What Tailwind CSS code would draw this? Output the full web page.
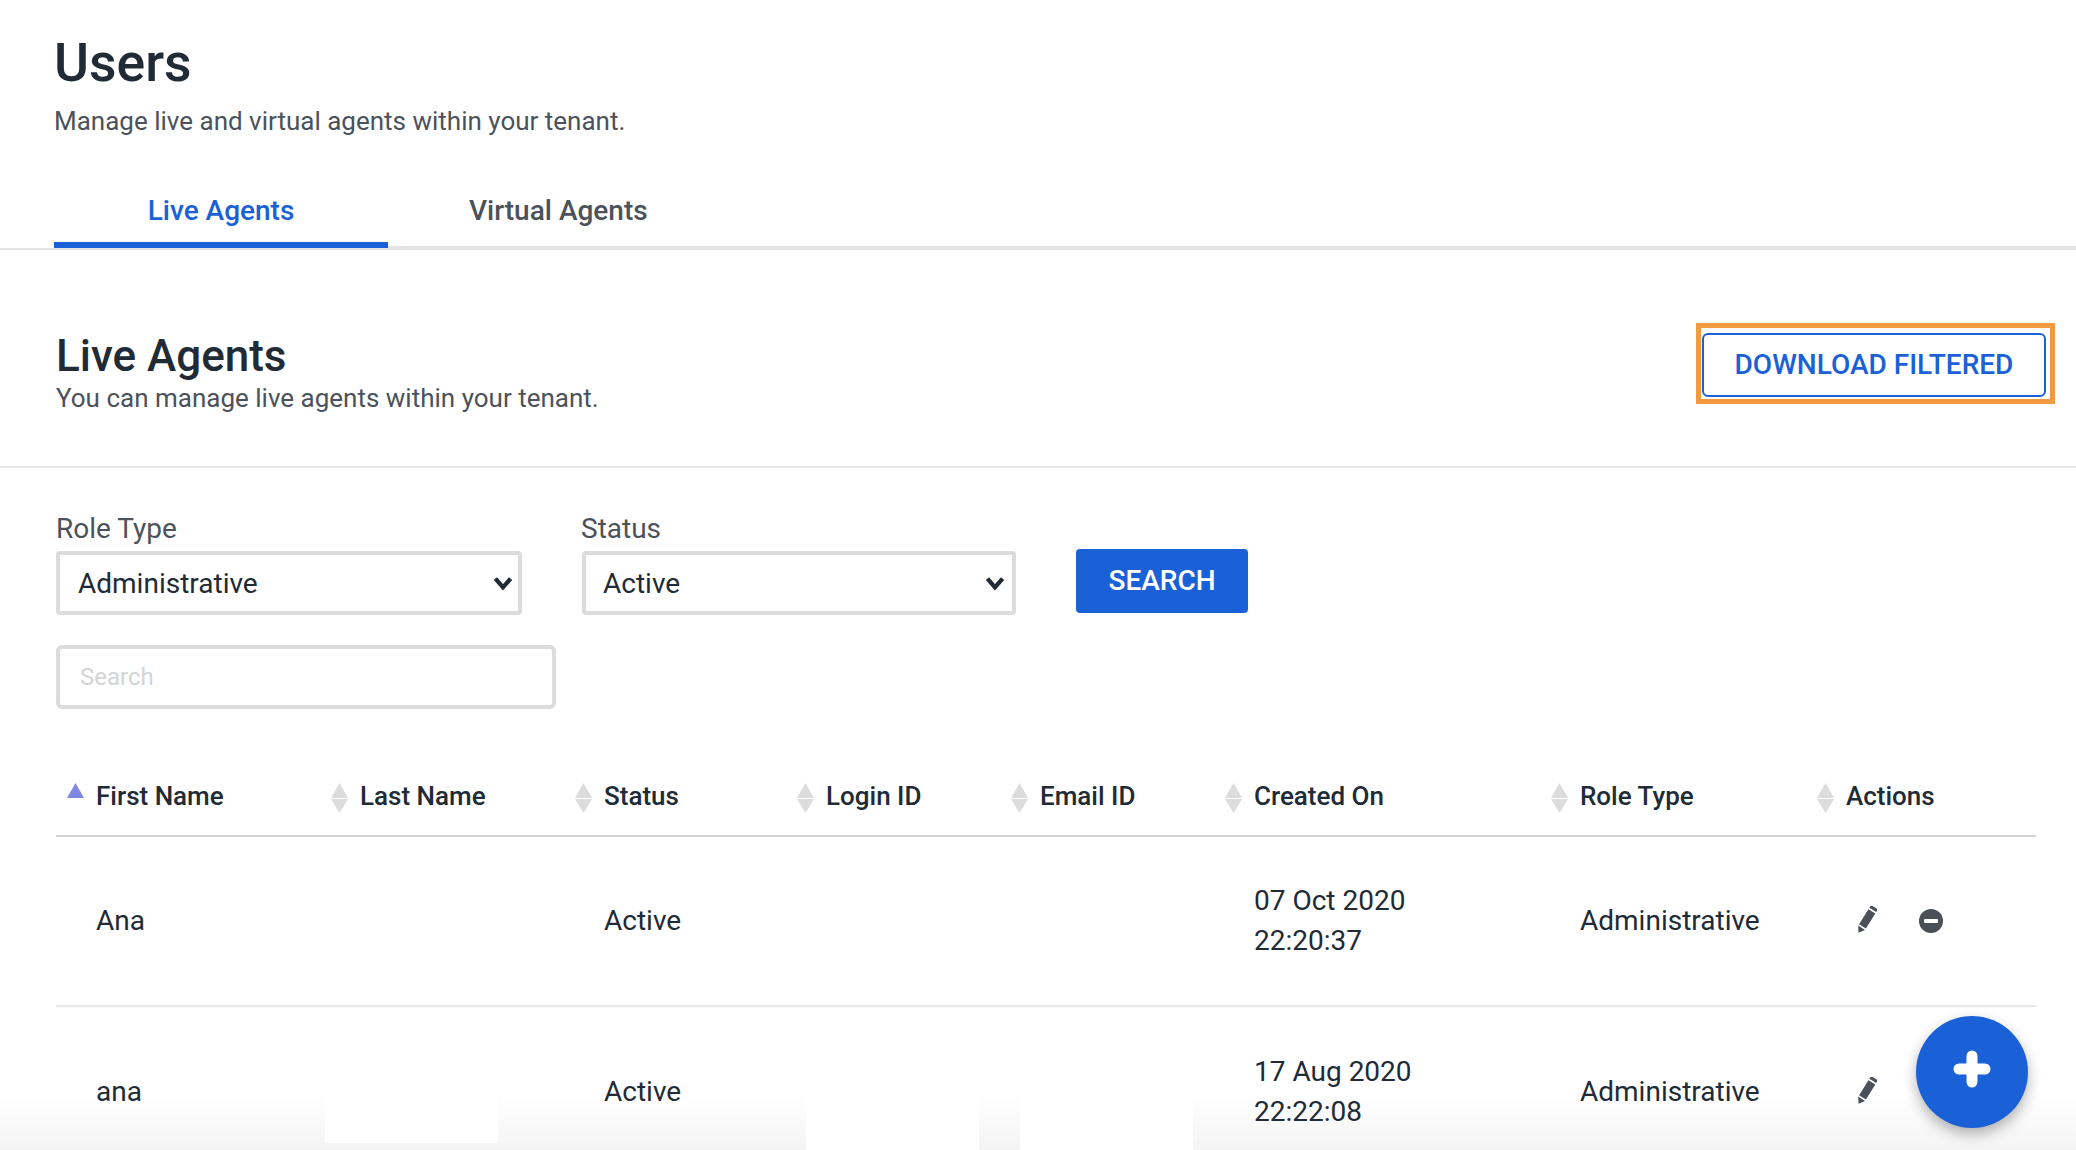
<!DOCTYPE html>
<html lang="en">
<head>
  <meta charset="UTF-8" />
  <title>Users</title>
  <script src="https://cdn.jsdelivr.net/npm/@tailwindcss/browser@4"></script>
</head>
<body class="relative h-screen overflow-hidden bg-white font-['Roboto',sans-serif] text-[#212b36]">

  <!-- FADE AT THE BOTTOM + HIDDEN VALUES -->
  <div class="absolute inset-x-0 bottom-0 h-[57px] bg-gradient-to-b from-white to-[#f4f4f4]"></div>
  <div class="absolute bottom-[7px] left-[325px] h-[50px] w-[173px] bg-white"></div>
  <div class="absolute bottom-0 left-[806px] h-[57px] w-[173px] bg-white"></div>
  <div class="absolute bottom-0 left-[1020px] h-[57px] w-[173px] bg-white"></div>

  <!-- PAGE HEADER -->
  <div class="relative pl-[54px] pt-[31px]">
    <h1 class="text-[53.5px] leading-[64px] font-medium">Users</h1>
    <p class="mt-[10px] text-[26px] leading-[32px] text-[#4b525b]">Manage live and virtual agents within your tenant.</p>
  </div>

  <!-- TABS -->
  <div class="relative mt-[35px] border-b-2 border-[#e4e4e4]">
    <div class="ml-[54px] flex h-[76px] border-b-2 border-[#e4e4e4]">
      <div class="-mb-[2px] flex h-[76px] w-[334px] items-center justify-center border-b-[6px] border-[#1a61d8] pt-[8px] text-[28px] font-medium text-[#1a61d8]">Live Agents</div>
      <div class="flex h-[76px] items-center px-[81px] pt-[2px] text-[28px] font-medium text-[#4b525b]">Virtual Agents</div>
    </div>
  </div>

  <!-- SECTION HEADER -->
  <div class="relative flex h-[218px] justify-between border-b-2 border-[#e8e8e8] pl-[56px] pr-[30px]">
    <div class="pt-[82px]">
      <h2 class="text-[44px] leading-[48px] font-medium">Live Agents</h2>
      <p class="mt-[2px] text-[26px] leading-[32px] text-[#4b525b]">You can manage live agents within your tenant.</p>
    </div>
    <div class="relative mt-[83px] h-[64px]">
      <button class="h-[64px] w-[344px] rounded-[6px] border-2 border-[#1a61d8] text-[28px] font-medium text-[#1a61d8]">DOWNLOAD FILTERED</button>
      <div class="absolute -top-[10px] -right-[9px] -bottom-[7px] -left-[6px] border-[5px] border-[#f29a3f]"></div>
    </div>
  </div>

  <!-- FILTERS -->
  <div class="relative pl-[56px] pt-[45px]">
    <div class="flex items-end gap-[60px]">
      <div class="w-[466px]">
        <label class="block text-[28px] leading-[32px] text-[#4b525b]">Role Type</label>
        <div class="relative mt-[6px] flex h-[64px] items-center rounded-[4px] border-4 border-[#dcdcdc] pl-[18px] pt-[1px] text-[28px]">
          Administrative
          <svg class="absolute right-[2px] top-[15px] h-[26px] w-[26px]" viewBox="0 0 24 24" fill="none" stroke="#212b36" stroke-width="4"><path d="M5 8l7 8 7-8" /></svg>
        </div>
      </div>
      <div class="w-[434px]">
        <label class="-ml-[1px] block text-[28px] leading-[32px] text-[#4b525b]">Status</label>
        <div class="relative mt-[6px] flex h-[64px] items-center rounded-[4px] border-4 border-[#dcdcdc] pl-[17px] pt-[1px] text-[28px]">
          Active
          <svg class="absolute right-[4px] top-[15px] h-[26px] w-[26px]" viewBox="0 0 24 24" fill="none" stroke="#212b36" stroke-width="4"><path d="M5 8l7 8 7-8" /></svg>
        </div>
      </div>
      <button class="mb-[2px] h-[64px] w-[172px] rounded-[4px] bg-[#1a61d8] text-[28px] font-medium text-white">SEARCH</button>
    </div>
    <input class="mt-[30px] block h-[64px] w-[500px] rounded-[6px] border-4 border-[#dcdcdc] pl-[20px] text-[24px] placeholder:text-[#d4d4d4]" placeholder="Search" />
  </div>

  <!-- TABLE -->
  <table class="relative ml-[56px] mt-[48px] w-[1980px] table-fixed border-separate border-spacing-0 text-left text-[28px]">
    <colgroup>
      <col class="w-[264px]" /><col class="w-[244px]" /><col class="w-[222px]" /><col class="w-[214px]" />
      <col class="w-[214px]" /><col class="w-[326px]" /><col class="w-[266px]" /><col class="w-[230px]" />
    </colgroup>
    <thead>
      <tr class="text-[26px] font-medium">
        <th class="h-[80px] border-b-2 border-[#d4d4d4] font-medium">
          <div class="flex items-center gap-[12px] pl-[11px]"><svg class="mt-1 h-[30px] w-[17px]" viewBox="0 0 17 30"><path d="M8.5 0L17 15H0z" fill="#7f88e0" /></svg>First Name</div>
        </th>
        <th class="h-[80px] border-b-2 border-[#d4d4d4] font-medium">
          <div class="flex items-center gap-[12px] pl-[11px]"><svg class="mt-1 h-[30px] w-[17px]" viewBox="0 0 17 30"><path d="M8.5 0L17 15H0zM0 16h17L8.5 30z" fill="#dcdcdc" /></svg>Last Name</div>
        </th>
        <th class="h-[80px] border-b-2 border-[#d4d4d4] font-medium">
          <div class="flex items-center gap-[12px] pl-[11px]"><svg class="mt-1 h-[30px] w-[17px]" viewBox="0 0 17 30"><path d="M8.5 0L17 15H0zM0 16h17L8.5 30z" fill="#dcdcdc" /></svg>Status</div>
        </th>
        <th class="h-[80px] border-b-2 border-[#d4d4d4] font-medium">
          <div class="flex items-center gap-[12px] pl-[11px]"><svg class="mt-1 h-[30px] w-[17px]" viewBox="0 0 17 30"><path d="M8.5 0L17 15H0zM0 16h17L8.5 30z" fill="#dcdcdc" /></svg>Login ID</div>
        </th>
        <th class="h-[80px] border-b-2 border-[#d4d4d4] font-medium">
          <div class="flex items-center gap-[12px] pl-[11px]"><svg class="mt-1 h-[30px] w-[17px]" viewBox="0 0 17 30"><path d="M8.5 0L17 15H0zM0 16h17L8.5 30z" fill="#dcdcdc" /></svg>Email ID</div>
        </th>
        <th class="h-[80px] border-b-2 border-[#d4d4d4] font-medium">
          <div class="flex items-center gap-[12px] pl-[11px]"><svg class="mt-1 h-[30px] w-[17px]" viewBox="0 0 17 30"><path d="M8.5 0L17 15H0zM0 16h17L8.5 30z" fill="#dcdcdc" /></svg>Created On</div>
        </th>
        <th class="h-[80px] border-b-2 border-[#d4d4d4] font-medium">
          <div class="flex items-center gap-[12px] pl-[11px]"><svg class="mt-1 h-[30px] w-[17px]" viewBox="0 0 17 30"><path d="M8.5 0L17 15H0zM0 16h17L8.5 30z" fill="#dcdcdc" /></svg>Role Type</div>
        </th>
        <th class="h-[80px] border-b-2 border-[#d4d4d4] font-medium">
          <div class="flex items-center gap-[12px] pl-[11px]"><svg class="mt-1 h-[30px] w-[17px]" viewBox="0 0 17 30"><path d="M8.5 0L17 15H0zM0 16h17L8.5 30z" fill="#dcdcdc" /></svg>Actions</div>
        </th>
      </tr>
    </thead>
    <tbody>
      <tr>
        <td class="h-[170px] border-b-2 border-[#e8e8e8] pl-[40px]">Ana</td>
        <td class="h-[170px] border-b-2 border-[#e8e8e8] pl-[40px]"></td>
        <td class="h-[170px] border-b-2 border-[#e8e8e8] pl-[40px]">Active</td>
        <td class="h-[170px] border-b-2 border-[#e8e8e8] pl-[40px]"></td>
        <td class="h-[170px] border-b-2 border-[#e8e8e8] pl-[40px]"></td>
        <td class="h-[170px] border-b-2 border-[#e8e8e8] pl-[40px] leading-[40px]">07 Oct 2020<br />22:20:37</td>
        <td class="h-[170px] border-b-2 border-[#e8e8e8] pl-[40px]">Administrative</td>
        <td class="h-[170px] border-b-2 border-[#e8e8e8] pl-[50px]">
          <div class="flex items-center gap-[42px]">
            <svg class="-mt-[3px] h-[28px] w-[21px]" viewBox="1 1 19 26" fill="#4a5058"><g transform="rotate(32 10.5 14)"><rect x="6.75" y="0" width="7.5" height="3" /><rect x="6.75" y="4.5" width="7.5" height="16.5" /><path d="M6.75 22.5h7.5L10.5 28z" /></g></svg>
            <svg class="h-[24px] w-[24px]" viewBox="0 0 24 24"><circle cx="12" cy="12" r="12" fill="#4a5058" /><rect x="5" y="10" width="14" height="4" rx="1" fill="#fff" /></svg>
          </div>
        </td>
      </tr>
      <tr>
        <td class="h-[170px] pl-[40px]">ana</td>
        <td class="h-[170px] pl-[40px]"></td>
        <td class="h-[170px] pl-[40px]">Active</td>
        <td class="h-[170px] pl-[40px]"></td>
        <td class="h-[170px] pl-[40px]"></td>
        <td class="h-[170px] pl-[40px] leading-[40px]">17 Aug 2020<br />22:22:08</td>
        <td class="h-[170px] pl-[40px]">Administrative</td>
        <td class="h-[170px] pl-[50px]">
          <svg class="-mt-[3px] h-[28px] w-[21px]" viewBox="1 1 19 26" fill="#4a5058"><g transform="rotate(32 10.5 14)"><rect x="6.75" y="0" width="7.5" height="3" /><rect x="6.75" y="4.5" width="7.5" height="16.5" /><path d="M6.75 22.5h7.5L10.5 28z" /></g></svg>
        </td>
      </tr>
    </tbody>
  </table>

  <!-- ADD BUTTON -->
  <button class="absolute left-[1916px] top-[1016px] flex h-[112px] w-[112px] items-center justify-center rounded-full bg-[#1a61d8] pb-[6px] shadow-[0_6px_14px_rgba(0,0,0,0.3)]">
    <svg class="h-[38px] w-[38px]" viewBox="0 0 38 38"><path d="M19 6v26M6 19h26" stroke="#fff" stroke-width="11" stroke-linecap="round" /></svg>
  </button>
</body>
</html>
